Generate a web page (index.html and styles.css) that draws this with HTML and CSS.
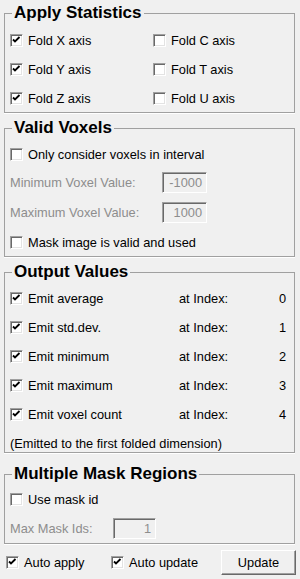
FILE: index.html
```html
<!DOCTYPE html>
<html lang="en">
<head>
    <meta charset="UTF-8">
    <meta name="viewport" content="width=device-width, initial-scale=1.0">
    <title>Statistics</title>
    <link rel="stylesheet" href="styles.css">
</head>
<body>
    <fieldset class="group stats">
        <legend>Apply Statistics</legend>
        <div class="two-cols">
            <label class="check"><span class="box"><svg viewBox="0 0 11 11"><path d="M2 4.5 L4 6.5 L8.5 2"/></svg></span>Fold X axis</label>
            <label class="check"><span class="box"></span>Fold C axis</label>
            <label class="check"><span class="box"><svg viewBox="0 0 11 11"><path d="M2 4.5 L4 6.5 L8.5 2"/></svg></span>Fold Y axis</label>
            <label class="check"><span class="box"></span>Fold T axis</label>
            <label class="check"><span class="box"><svg viewBox="0 0 11 11"><path d="M2 4.5 L4 6.5 L8.5 2"/></svg></span>Fold Z axis</label>
            <label class="check"><span class="box"></span>Fold U axis</label>
        </div>
    </fieldset>

    <fieldset class="group voxels">
        <legend>Valid Voxels</legend>
        <label class="check"><span class="box"></span>Only consider voxels in interval</label>
        <div class="field first">
            <span class="muted">Minimum Voxel Value:</span>
            <span class="entry">-1000</span>
        </div>
        <div class="field second">
            <span class="muted">Maximum Voxel Value:</span>
            <span class="entry">1000</span>
        </div>
        <label class="check last"><span class="box"></span>Mask image is valid and used</label>
    </fieldset>

    <fieldset class="group output">
        <legend>Output Values</legend>
        <div class="out-grid">
            <label class="check"><span class="box"><svg viewBox="0 0 11 11"><path d="M2 4.5 L4 6.5 L8.5 2"/></svg></span>Emit average</label>
            <span>at Index:</span><span class="num">0</span>
            <label class="check"><span class="box"><svg viewBox="0 0 11 11"><path d="M2 4.5 L4 6.5 L8.5 2"/></svg></span>Emit std.dev.</label>
            <span>at Index:</span><span class="num">1</span>
            <label class="check"><span class="box"><svg viewBox="0 0 11 11"><path d="M2 4.5 L4 6.5 L8.5 2"/></svg></span>Emit minimum</label>
            <span>at Index:</span><span class="num">2</span>
            <label class="check"><span class="box"><svg viewBox="0 0 11 11"><path d="M2 4.5 L4 6.5 L8.5 2"/></svg></span>Emit maximum</label>
            <span>at Index:</span><span class="num">3</span>
            <label class="check"><span class="box"><svg viewBox="0 0 11 11"><path d="M2 4.5 L4 6.5 L8.5 2"/></svg></span>Emit voxel count</label>
            <span>at Index:</span><span class="num">4</span>
            <span class="note">(Emitted to the first folded dimension)</span>
        </div>
    </fieldset>

    <fieldset class="group masks">
        <legend>Multiple Mask Regions</legend>
        <label class="check"><span class="box"></span>Use mask id</label>
        <div class="field mask-field">
            <span class="muted">Max Mask Ids:</span>
            <span class="entry">1</span>
        </div>
    </fieldset>

    <div class="actions">
        <label class="check"><span class="box"><svg viewBox="0 0 11 11"><path d="M2 4.5 L4 6.5 L8.5 2"/></svg></span>Auto apply</label>
        <label class="check"><span class="box"><svg viewBox="0 0 11 11"><path d="M2 4.5 L4 6.5 L8.5 2"/></svg></span>Auto update</label>
        <button class="btn">Update</button>
    </div>
</body>
</html>
```

FILE: styles.css
```css
/* Base */
body {
    margin: 0;
    width: 300px;
    height: 579px;
    background: #f0f0f0;
    font-family: 'Liberation Sans', Arial, sans-serif;
    font-size: 12.8px;
    color: #000;
    overflow: hidden;
}

/* Group boxes */
.group {
    margin: 6px 5px 0 4px;
    padding: 9px 8px 6px 5px;
    border: 1px solid #a0a0a0;
    box-shadow: 0 1px 0 #fff;
}

.group legend {
    margin-left: 2px;
    padding: 0 2px;
    font-size: 17px;
    font-weight: bold;
    line-height: 18px;
}

.stats {
    margin-top: 4px;
    padding-top: 10px;
}

.output {
    padding-bottom: 1px;
}

.masks {
    margin-top: 12px;
    padding-top: 8px;
    padding-bottom: 4px;
}

/* Checkboxes */
.check {
    display: flex;
    align-items: center;
    gap: 5px;
    height: 16px;
    white-space: nowrap;
}

.box {
    box-sizing: border-box;
    width: 13px;
    height: 13px;
    flex: none;
    background: #fff;
    border: 1px solid;
    border-color: #a0a0a0 #fff #fff #a0a0a0;
    box-shadow: inset 1px 1px 0 #696969, inset -1px -1px 0 #e3e3e3;
}

.box svg {
    display: block;
    width: 11px;
    height: 11px;
}

.box path {
    fill: none;
    stroke: #000;
    stroke-width: 1.8;
}

.two-cols {
    display: grid;
    grid-template-columns: 143px 1fr;
    grid-auto-rows: 16px;
    row-gap: 13px;
}

/* Value fields */
.field {
    display: grid;
    grid-template-columns: 152px 45px;
    align-items: center;
    height: 21px;
}

.field.first {
    margin-top: 10px;
}

.field.second {
    margin-top: 9px;
}

.check.last {
    margin-top: 11px;
}

.mask-field {
    grid-template-columns: 103px 43px;
    margin-top: 11px;
}

.muted {
    color: #8d8d8d;
}

.entry {
    box-sizing: border-box;
    height: 21px;
    padding-right: 4px;
    color: #8d8d8d;
    text-align: right;
    line-height: 19px;
    border: 1px solid;
    border-color: #a0a0a0 #fff #fff #a0a0a0;
    box-shadow: inset 1px 1px 0 #696969;
}

/* Output values */
.out-grid {
    display: grid;
    grid-template-columns: 169px auto 1fr;
    grid-auto-rows: 16px;
    row-gap: 13px;
    align-items: center;
}

.num {
    text-align: right;
}

.note {
    grid-column: 1 / -1;
}

/* Bottom bar */
.actions {
    display: grid;
    grid-template-columns: 105px 110px 75px;
    align-items: center;
    margin-top: 6px;
    padding-left: 6px;
}

.btn {
    height: 25px;
    padding: 0;
    font-family: inherit;
    font-size: 12.8px;
    color: #000;
    background: #f0f0f0;
    border: 1px solid;
    border-color: #fff #696969 #696969 #fff;
    box-shadow: inset -1px -1px 0 #a0a0a0;
}
```
